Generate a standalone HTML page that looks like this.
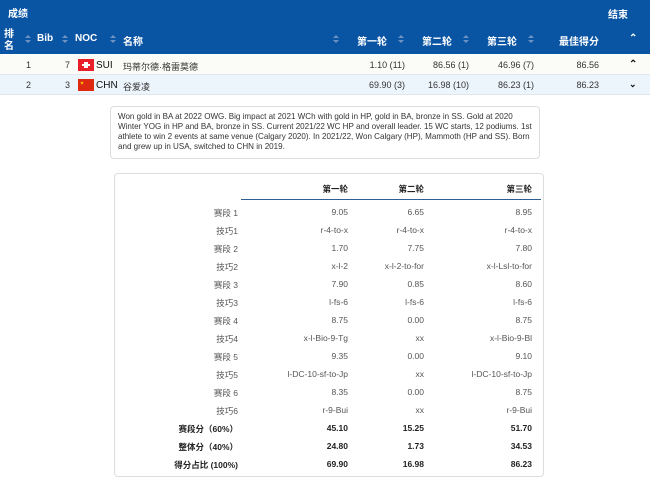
<!DOCTYPE html>
<html><head><meta charset="utf-8"><style>
*{margin:0;padding:0;box-sizing:border-box}
body{width:650px;height:477px;background:#fff;font-family:"Liberation Sans","Noto Sans CJK SC",sans-serif;position:relative;overflow:hidden;color:#333}
.a{position:absolute;white-space:nowrap}
.hd{position:absolute;left:0;top:0;width:650px;height:54px;background:#0a54a4;color:#fff;font-weight:bold;font-size:10px}
.r{text-align:right}
.s{position:absolute;width:6px;height:9px}
.s:before{content:"";position:absolute;left:0;top:0;border:3px solid transparent;border-bottom:3px solid #6d93c4;border-top:0}
.s:after{content:"";position:absolute;left:0;top:5px;border:3px solid transparent;border-top:3px solid #6d93c4;border-bottom:0}
.row{position:absolute;left:0;width:650px;height:20px;font-size:9px;color:#333}
.c{font-size:8.5px;color:#555}
.b{font-weight:bold;color:#222}
</style></head><body>
<div class="hd">
<div class="a" style="left:8px;top:5px">成绩</div>
<div class="a" style="left:608px;top:6px">结束</div>
<div class="a" style="left:4px;top:29px;line-height:12px">排<br>名</div>
<div class="s" style="left:25px;top:35px"></div>
<div class="a" style="left:37px;top:33px">Bib</div>
<div class="s" style="left:62px;top:35px"></div>
<div class="a" style="left:75px;top:33px">NOC</div>
<div class="s" style="left:110px;top:35px"></div>
<div class="a" style="left:123px;top:33px">名称</div>
<div class="s" style="left:333px;top:35px"></div>
<div class="a r" style="left:345px;width:42px;top:33px">第一轮</div>
<div class="s" style="left:398px;top:35px"></div>
<div class="a r" style="left:410px;width:42px;top:33px">第二轮</div>
<div class="s" style="left:463px;top:35px"></div>
<div class="a r" style="left:475px;width:42px;top:33px">第三轮</div>
<div class="s" style="left:528px;top:35px"></div>
<div class="a r" style="left:540px;width:59px;top:33px">最佳得分</div>
<div class="a" style="left:629px;top:33px;font-size:10px">⌃</div>
</div>
<div class="row" style="top:55px;background:#fbfbf8;border-bottom:1px solid #e4e8ee">
<div class="a" style="left:26px;top:5px">1</div>
<div class="a" style="left:65px;top:5px">7</div>
<div class="a" style="left:78px;top:4px;width:16px;height:12px;background:#e8202a"><div class="a" style="left:6px;top:3px;width:4px;height:6px;background:#fff"></div><div class="a" style="left:4px;top:5px;width:8px;height:2px;background:#fff"></div></div>
<div class="a" style="left:96px;top:5px;font-size:10px;color:#111">SUI</div>
<div class="a" style="left:123px;top:5px">玛蒂尔德·格雷莫德</div>
<div class="a r" style="left:340px;width:65px;top:5px">1.10 (11)</div>
<div class="a r" style="left:405px;width:64px;top:5px">86.56 (1)</div>
<div class="a r" style="left:470px;width:64px;top:5px">46.96 (7)</div>
<div class="a r" style="left:540px;width:59px;top:5px">86.56</div>
<div class="a" style="left:629px;top:4px;font-size:10px;font-weight:bold;color:#111">⌃</div>
</div>
<div class="row" style="top:75px;background:#edf5fc;border-bottom:1px solid #dfe6ee">
<div class="a" style="left:26px;top:5px">2</div>
<div class="a" style="left:65px;top:5px">3</div>
<div class="a" style="left:78px;top:4px;width:16px;height:12px;background:#de2910"><div class="a" style="left:2px;top:1px;font-size:4px;color:#ffde00">★</div></div>
<div class="a" style="left:96px;top:5px;font-size:10px;color:#111">CHN</div>
<div class="a" style="left:123px;top:5px">谷爱凌</div>
<div class="a r" style="left:340px;width:65px;top:5px">69.90 (3)</div>
<div class="a r" style="left:405px;width:64px;top:5px">16.98 (10)</div>
<div class="a r" style="left:470px;width:64px;top:5px">86.23 (1)</div>
<div class="a r" style="left:540px;width:59px;top:5px">86.23</div>
<div class="a" style="left:629px;top:4px;font-size:9px;font-weight:bold;color:#111">⌄</div>
</div>
<div class="a" style="left:110px;top:106px;width:430px;height:53px;border:1px solid #ddd;border-radius:4px;padding:5px 7px;font-size:8.05px;line-height:10px;white-space:normal;color:#333">Won gold in BA at 2022 OWG. Big impact at 2021 WCh with gold in HP, gold in BA, bronze in SS. Gold at 2020 Winter YOG in HP and BA, bronze in SS. Current 2021/22 WC HP and overall leader. 15 WC starts, 12 podiums. 1st athlete to win 2 events at same venue (Calgary 2020). In 2021/22, Won Calgary (HP), Mammoth (HP and SS). Born and grew up in USA, switched to CHN in 2019.</div>
<div class="a" style="left:114px;top:173px;width:430px;height:304px;border:1px solid #ddd;border-radius:4px"></div>
<div class="a" style="left:241px;top:199px;width:300px;height:1px;background:#2e5f8e"></div>
<div class="a r b" style="left:290px;width:58px;top:183px;font-size:8.5px">第一轮</div>
<div class="a r b" style="left:366px;width:58px;top:183px;font-size:8.5px">第二轮</div>
<div class="a r b" style="left:474px;width:58px;top:183px;font-size:8.5px">第三轮</div>
<div id="t"></div>
<script>
var d=[["赛段 1","9.05","6.65","8.95"],["技巧1","r-4-to-x","r-4-to-x","r-4-to-x"],["赛段 2","1.70","7.75","7.80"],["技巧2","x-l-2","x-l-2-to-for","x-l-Lsl-to-for"],["赛段 3","7.90","0.85","8.60"],["技巧3","l-fs-6","l-fs-6","l-fs-6"],["赛段 4","8.75","0.00","8.75"],["技巧4","x-l-Bio-9-Tg","xx","x-l-Bio-9-Bl"],["赛段 5","9.35","0.00","9.10"],["技巧5","l-DC-10-sf-to-Jp","xx","l-DC-10-sf-to-Jp"],["赛段 6","8.35","0.00","8.75"],["技巧6","r-9-Bui","xx","r-9-Bui"],["赛段分（60%）","45.10","15.25","51.70",1],["整体分（40%）","24.80","1.73","34.53",1],["得分占比 (100%)","69.90","16.98","86.23",1]];
var h="";d.forEach(function(r,i){var y=207+i*18,c=r[4]?"a r b":"a r c",fs=r[4]?"font-size:8.5px;":"";
h+='<div class="'+c+'" style="'+fs+'left:140px;width:98px;top:'+y+'px">'+r[0]+'</div>';
h+='<div class="'+c+'" style="'+fs+'left:248px;width:100px;top:'+y+'px">'+r[1]+'</div>';
h+='<div class="'+c+'" style="'+fs+'left:324px;width:100px;top:'+y+'px">'+r[2]+'</div>';
h+='<div class="'+c+'" style="'+fs+'left:422px;width:110px;top:'+y+'px">'+r[3]+'</div>';});
document.getElementById("t").innerHTML=h;
</script>
</body></html>
